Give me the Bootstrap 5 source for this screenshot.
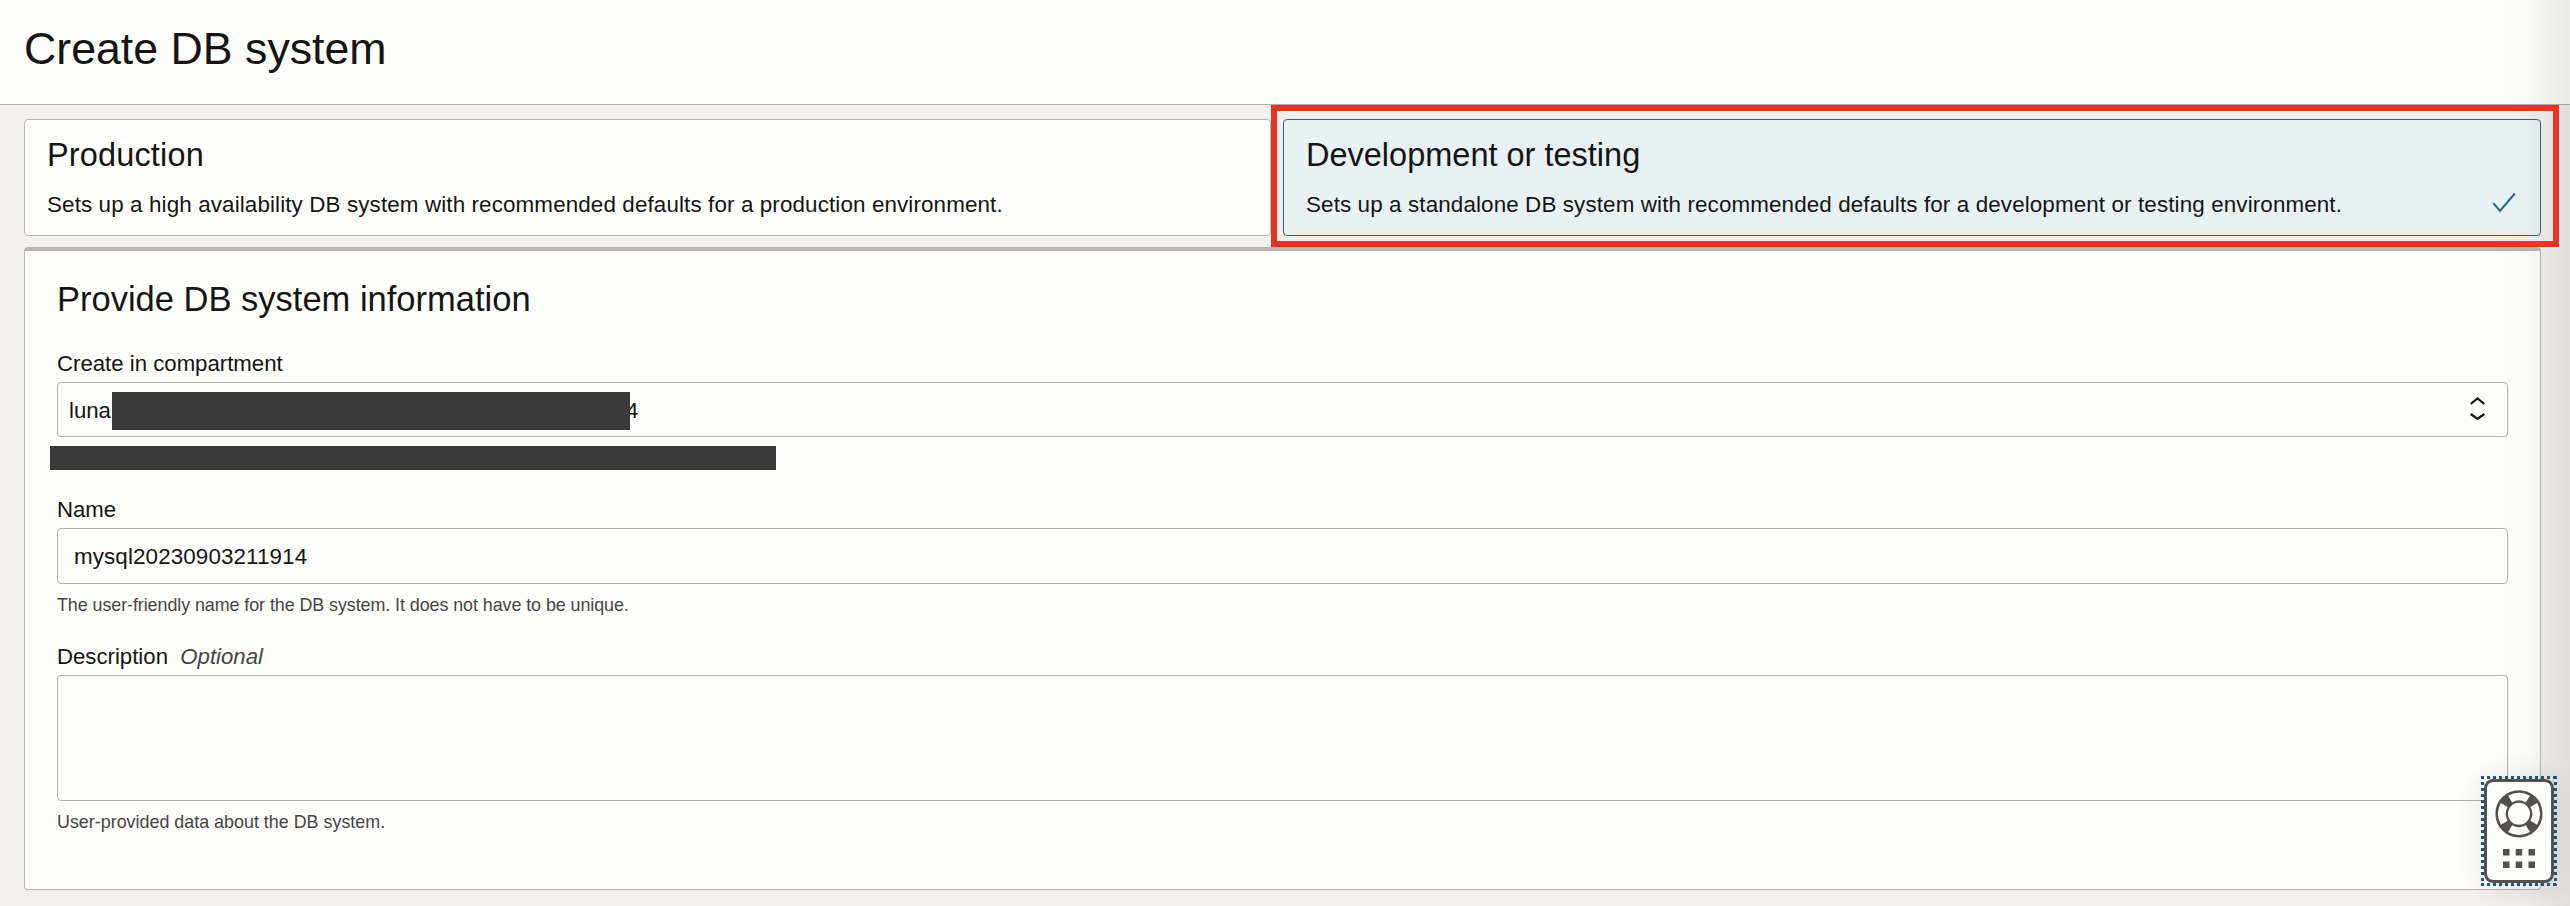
<!DOCTYPE html>
<html lang="en">
<head>
<meta charset="utf-8">
<title>Create DB system</title>
<link rel="stylesheet" href="https://cdn.jsdelivr.net/npm/bootstrap@5.3.0/dist/css/bootstrap.min.css">
<style>
body{font-family:"Liberation Sans",Arial,sans-serif;font-size:22.2px;line-height:30px;color:#161513;background:#f2f1f0;height:906px;overflow:hidden}
.page-head{height:105px;background:#fdfdfc;border-bottom:1px solid #b5b0ab;padding-left:24px}
.page-head h1{font-size:44.7px;line-height:97px;font-weight:400}
.option{background:#fdfdfc;border:1px solid #bcb6b1;border-radius:4px;height:117px;padding:15px 22px 0}
.option h2{font-size:32.5px;line-height:40px;font-weight:400;margin:0 0 15px}
.opt-a h2{letter-spacing:.15px}
.option p{font-size:22.4px;letter-spacing:.12px;white-space:nowrap}
.opt-a{width:1247px}
.selected{background:#e8f1f4;border-color:#29648c}
.check{margin-bottom:21px}
.options{padding:14px 29px 11px 24px;gap:12px}
.callout{left:1271px;top:105px;width:1288px;height:142px;border:6px solid #eb3323;z-index:3}
.panel{margin:0 29px 0 24px;height:643px;background:#fdfdfc;border:1px solid #bcb6b1;border-top:4px solid #bcb6b1;border-radius:4px;padding:28px 32px 0}
.panel h2{font-size:34.5px;line-height:40px;font-weight:400;margin:0 0 29px}
.field-label{margin-bottom:2px;line-height:32px}
.field-label i,.hint{color:#474543}
.field-box{background:#fdfdfc;border:1px solid #b5b1ad;border-radius:4px}
.h-select{height:55px;padding:3px 22px 0 11px}
.h-input{height:56px;padding:2px 0 0 16px;font-size:22.4px;letter-spacing:.11px}
.h-area{height:126px}
.hint{font-size:17.9px;line-height:24px;margin-top:9px}
.hint-name{letter-spacing:-.07px}
.redact{background:#3a3a3a}
.r-one{width:518px;height:38px;margin-left:1px;z-index:1}
.r-two{width:726px;height:24px;margin:9px 0 24px -7px}
.tail{margin-left:-4px}
.chev{margin-bottom:5px}
.edge{right:0;top:0;width:80px;height:906px;background:linear-gradient(90deg,rgba(40,35,30,0),rgba(40,35,30,.018) 45%,rgba(40,35,30,.09));z-index:2}
.help-dock{left:2484px;top:779px;width:70px;height:104px;background:#fdfdfc;border:3px solid #53504d;border-radius:9px;box-shadow:0 2px 26px 4px rgba(40,35,30,.1);z-index:4}
.help-ring{left:2481px;top:776px;z-index:5}
</style>
</head>
<body class="position-relative">
<header class="page-head"><h1 class="m-0">Create DB system</h1></header>
<main>
<div class="options d-flex">
<section class="option opt-a flex-shrink-0"><h2>Production</h2><p class="m-0">Sets up a high availability DB system with recommended defaults for a production environment.</p></section>
<section class="option selected flex-grow-1 d-flex justify-content-between">
<div><h2>Development or testing</h2><p class="m-0">Sets up a standalone DB system with recommended defaults for a development or testing environment.</p></div>
<svg class="check mt-auto" width="26" height="22" viewBox="0 0 26 22" fill="none" stroke="#29648c" stroke-width="2"><path d="M1.300 11.200 8 19 22.800 1.500"/></svg>
</section>
</div>
<section class="panel">
<h2>Provide DB system information</h2>
<div class="field-label">Create in compartment</div>
<div class="field-box h-select d-flex align-items-center">
<span>luna</span><span class="redact r-one position-relative"></span><span class="tail">4</span>
<svg class="chev ms-auto" width="15" height="24" viewBox="0 0 15 24" fill="none" stroke="#161513" stroke-width="2.200"><path d="M.7 7 7.500 1.500 14.300 7M.7 17l6.800 5L14.300 17"/></svg>
</div>
<div class="redact r-two"></div>
<div class="field-label">Name</div>
<div class="field-box h-input d-flex align-items-center">mysql20230903211914</div>
<div class="hint hint-name">The user-friendly name for the DB system. It does not have to be unique.</div>
<div class="field-label mt-4">Description&nbsp; <i>Optional</i></div>
<div class="field-box h-area"></div>
<div class="hint">User-provided data about the DB system.</div>
</section>
</main>
<div class="edge position-absolute"></div>
<div class="callout position-absolute"></div>
<div class="help-dock position-absolute">
<svg class="d-block" width="64" height="98" viewBox="2487 782 64 98">
<g fill="none" transform="translate(2519 813.800)">
<circle r="17.300" stroke="#53504d" stroke-width="12.600"/>
<g stroke="#fdfdfc" stroke-width="7.800"><path d="M-8.860-14.740A17.200 17.200 0 0 1 8.860-14.740"/><path d="M14.740-8.860A17.200 17.200 0 0 1 14.740 8.860"/><path d="M8.860 14.740A17.200 17.200 0 0 1-8.860 14.740"/><path d="M-14.740 8.860A17.200 17.200 0 0 1-14.740-8.860"/></g>
</g>
<path fill="#53504d" d="M2503 849h6.500v6.500h-6.500zM2515.700 849h6.500v6.500h-6.500zM2528.500 849h6.500v6.500h-6.500zM2503 861.500h6.500v6.500h-6.500zM2515.700 861.500h6.500v6.500h-6.500zM2528.500 861.500h6.500v6.500h-6.500z"/>
</svg>
</div>
<svg class="help-ring position-absolute" width="76" height="110" viewBox="0 0 76 110"><path d="M0 1.500H76M0 108.500H76M1.500 0V110M74.500 0V110" fill="none" stroke="#1f547c" stroke-width="3" stroke-dasharray="3 3"/></svg>
<script src="https://cdn.jsdelivr.net/npm/bootstrap@5.3.0/dist/js/bootstrap.bundle.min.js"></script>
</body>
</html>
